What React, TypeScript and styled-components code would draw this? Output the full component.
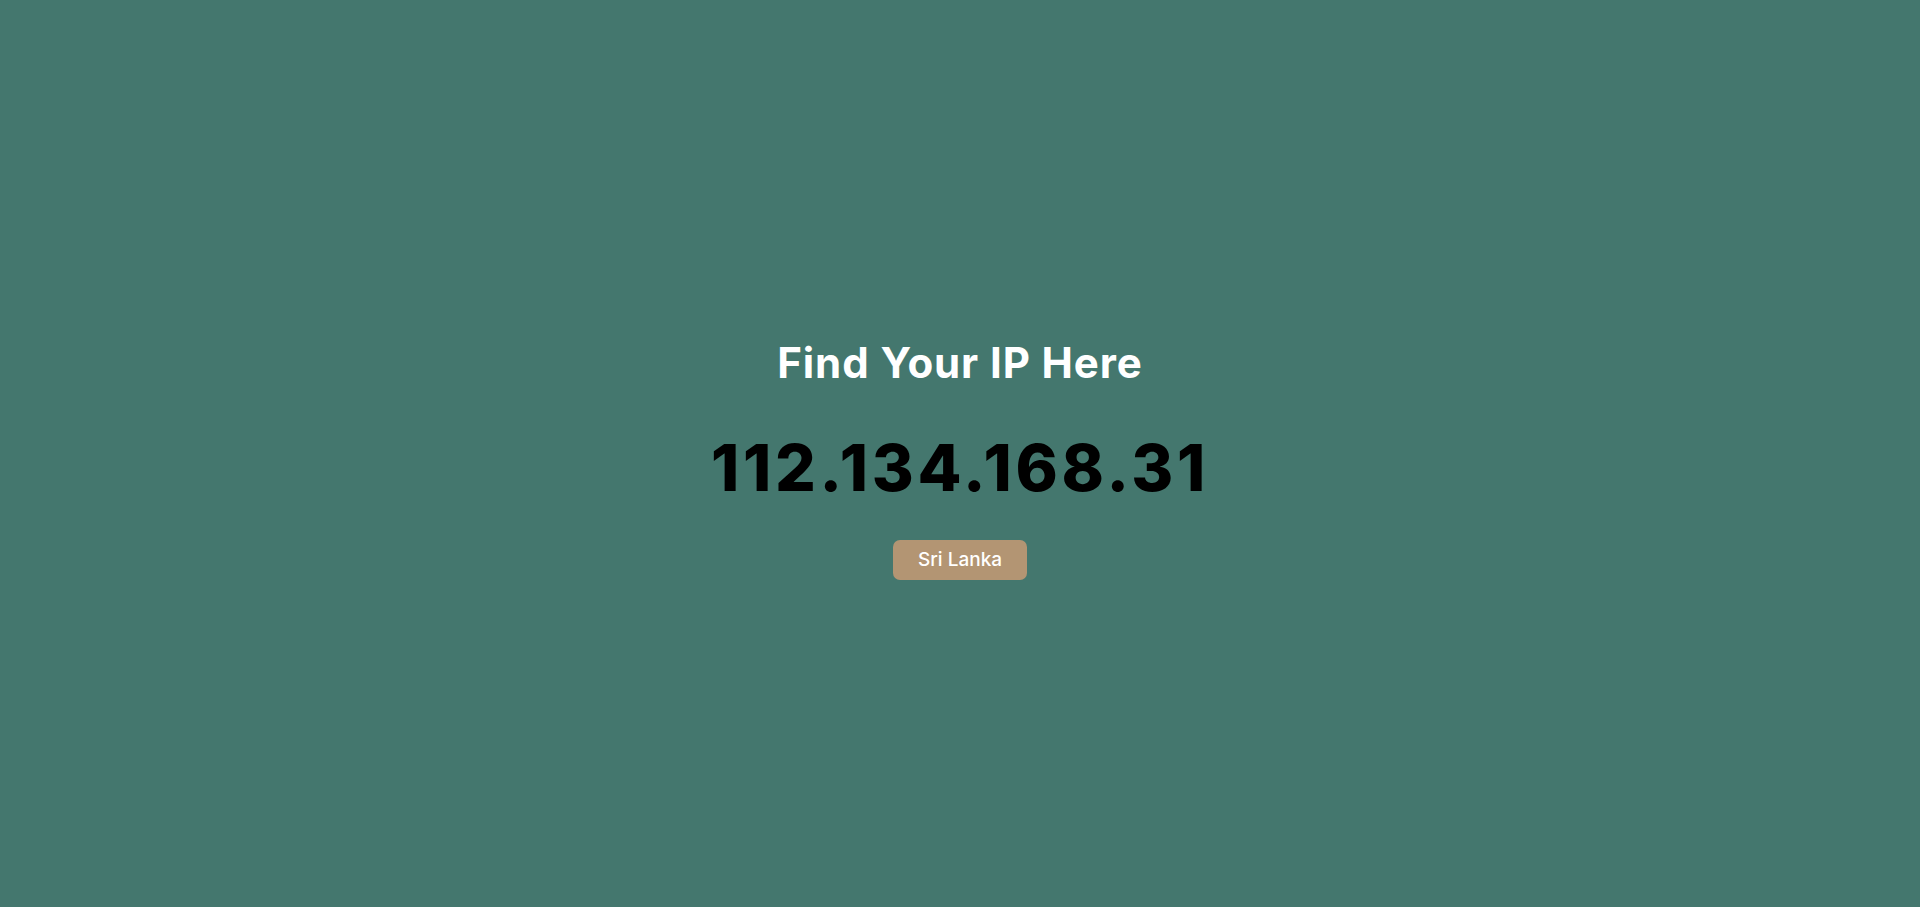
import React from "react";
import styled, { createGlobalStyle } from "styled-components";

const colors = {
  background: "#44776e",
  badge: "#b39573",
  white: "#ffffff",
  black: "#000000",
};

const GlobalStyle = createGlobalStyle`
  html, body, #root {
    margin: 0;
    padding: 0;
    height: 100%;
  }
  body {
    background: ${colors.background};
    font-family: Inter, "Liberation Sans", sans-serif;
  }
`;

const Page = styled.main`
  min-height: 100vh;
  display: flex;
  flex-direction: column;
  align-items: center;
  justify-content: center;
  padding-top: 11px;
  box-sizing: border-box;
`;

const Title = styled.h1`
  margin: 0;
  color: ${colors.white};
  font-size: 42px;
  font-weight: 700;
  letter-spacing: 0.9px;
  line-height: 48px;
`;

const Address = styled.p`
  margin: 45px 0 0;
  color: ${colors.black};
  font-size: 64px;
  font-weight: 800;
  letter-spacing: 3.7px;
  line-height: 72px;
`;

const Country = styled.span`
  margin-top: 36px;
  display: inline-flex;
  align-items: center;
  justify-content: center;
  height: 40px;
  padding: 0 25px;
  border-radius: 7px;
  background: ${colors.badge};
  color: ${colors.white};
  font-size: 19px;
  font-weight: 500;
`;

export default function App() {
  const ip = "112.134.168.31";
  const country = "Sri Lanka";

  return (
    <>
      <GlobalStyle />
      <Page>
        <Title>Find Your IP Here</Title>
        <Address>{ip}</Address>
        <Country>{country}</Country>
      </Page>
    </>
  );
}
